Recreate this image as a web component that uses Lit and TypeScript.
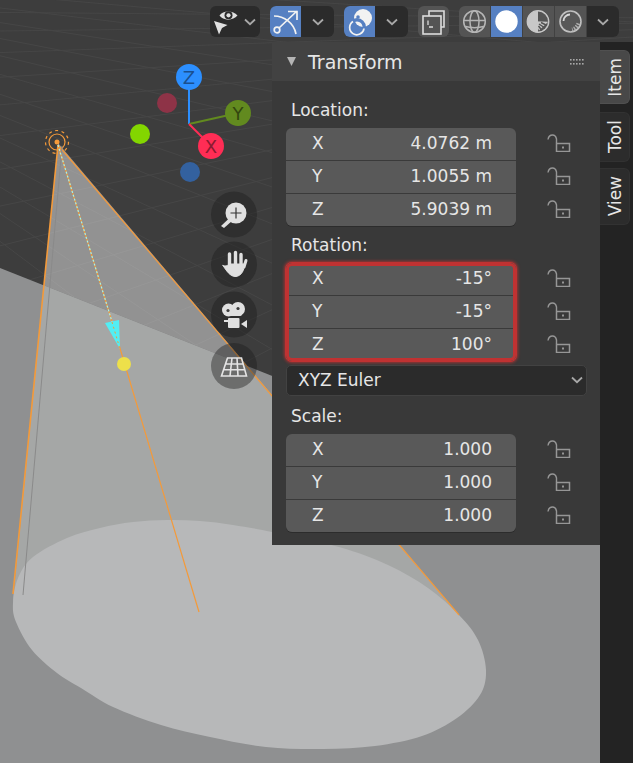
import { LitElement, html, svg, css } from 'lit';
import { customElement } from 'lit/decorators.js';

const SCENE_EDGE = '0,268 633,519 633,763 0,763';
const SKY_EDGE = '0,0 633,0 633,519 0,268';
const CONE = '58,143 13,600 24,620 459,615';
const DISC: number[][] = [
  [13, 603], [16, 622], [32, 650], [57, 673], [81, 688], [113, 707], [161, 725], [210, 737],
  [266, 747], [323, 749], [375, 746], [422, 736], [457, 718], [480, 695], [486, 670], [478, 640],
  [459, 615], [428, 588], [388, 565], [339, 547], [272, 532], [233, 525], [200, 521], [167, 520],
  [133, 522], [100, 528], [67, 538], [33, 557], [18, 578],
];

// closed catmull-rom through the outline points
const smoothPath = (pts: number[][]) => {
  const n = pts.length;
  let d = `M${pts[0][0]} ${pts[0][1]}`;
  for (let i = 0; i < n; i++) {
    const [p0, p1, p2, p3] = [pts[(i + n - 1) % n], pts[i], pts[(i + 1) % n], pts[(i + 2) % n]];
    const c1 = [p1[0] + (p2[0] - p0[0]) / 6, p1[1] + (p2[1] - p0[1]) / 6];
    const c2 = [p2[0] - (p3[0] - p1[0]) / 6, p2[1] - (p3[1] - p1[1]) / 6];
    d += `C${c1[0]} ${c1[1]} ${c2[0]} ${c2[1]} ${p2[0]} ${p2[1]}`;
  }
  return d + 'Z';
};

// two families of floor lines, each fanning out of its vanishing point
const gridLines = () => {
  const lines = [];
  for (let i = 0; i < 20; i++) {
    const y = -120 + i * i * 2.2 + i * 24;
    lines.push([-300, -40 + i * 4, 700, y + 120]);
  }
  for (let i = 0; i < 20; i++) {
    const y = 12 + i * i * 1.6 + i * 18;
    lines.push([900, 20, -50, y]);
  }
  return lines;
};

const lockIcon = html`<svg class="lock" width="24" height="18" viewBox="0 0 24 18">
  <path d="M1 5.5C1.5 2.5 3.5 1 5.5 1S9 2.5 9.5 5V9" fill="none" stroke="#969696" stroke-width="1.4" />
  <rect x="9.5" y="9.5" width="13" height="8" fill="none" stroke="#969696" stroke-width="1.5" />
  <rect x="15" y="12.5" width="2" height="2" fill="#969696" />
</svg>`;

const chevron = html`<svg width="12" height="8" viewBox="0 0 12 8">
  <path d="M1 1.5L6 6.2L11 1.5" fill="none" stroke="#a8a8a8" stroke-width="1.8" />
</svg>`;

const transformFields = {
  location: [
    ['X', '4.0762 m'],
    ['Y', '1.0055 m'],
    ['Z', '5.9039 m'],
  ],
  rotation: [
    ['X', '-15°'],
    ['Y', '-15°'],
    ['Z', '100°'],
  ],
  scale: [
    ['X', '1.000'],
    ['Y', '1.000'],
    ['Z', '1.000'],
  ],
};

@customElement('app-root')
export class AppRoot extends LitElement {
  static styles = css`
    :host {
      display: block;
      width: 633px;
      height: 763px;
      font-family: 'DejaVu Sans', sans-serif;
      font-size: 17px;
      color: #e6e6e6;
    }
    .screen {
      position: relative;
      width: 633px;
      height: 763px;
      overflow: hidden;
      background: #3d3d3d;
    }
    .scene {
      position: absolute;
      inset: 0;
    }
    .toolbar {
      position: relative;
      height: 42px;
      box-sizing: border-box;
      padding: 6px 14px 5px 0;
      display: flex;
      justify-content: flex-end;
      gap: 10px;
    }
    .group {
      display: flex;
      height: 31px;
      border-radius: 6px;
      overflow: hidden;
      background: #2b2b2b;
    }
    .group.xray {
      background: #545454;
    }
    .seg {
      width: 31px;
      height: 31px;
      display: flex;
      align-items: center;
      justify-content: center;
    }
    .seg.drop {
      width: 33px;
    }
    .seg.on {
      background: #5680c2;
    }
    .seg.grey {
      background: #545454;
    }
    .seg.wide {
      width: 50px;
      justify-content: flex-start;
    }
    .group.shading {
      gap: 1px;
      background: #414141;
    }
    .shading .seg.drop {
      width: 32px;
      background: #2b2b2b;
    }
    .dock {
      position: relative;
      height: 721px;
      display: flex;
      justify-content: flex-end;
      align-items: flex-start;
    }
    .panel {
      width: 328px;
      background: #393939;
    }
    .panel-head {
      height: 39px;
      display: flex;
      align-items: center;
      padding: 0 16px 0 15px;
      background: #424242;
      font-size: 19px;
    }
    .panel-head .title {
      margin-left: 12px;
      flex: 1;
    }
    .panel-body {
      padding: 19px 13px 13px 14px;
    }
    .label {
      height: 20px;
      line-height: 20px;
      padding-left: 5px;
      margin-bottom: 8px;
    }
    .section {
      display: flex;
      margin-bottom: 9px;
    }
    .fields {
      position: relative;
      width: 230px;
      display: flex;
      flex-direction: column;
      gap: 1px;
      background: #3a3a3a;
      border-radius: 6px;
      overflow: hidden;
      box-shadow: 0 1px 0 #2c2c2c;
    }
    .row {
      height: 32px;
      box-sizing: border-box;
      padding: 0 24px 2px 26px;
      display: flex;
      align-items: center;
      justify-content: space-between;
      background: #595959;
    }
    .alert {
      overflow: visible;
      box-shadow: 0 0 0 1px #c03232, 0 0 3px 2px rgba(192, 50, 50, 0.75);
    }
    .alert .row:first-child {
      border-radius: 6px 6px 0 0;
    }
    .alert .row:last-child {
      border-radius: 0 0 6px 6px;
    }
    .alert::after {
      content: '';
      position: absolute;
      inset: 0;
      border-radius: 6px;
      box-shadow: inset 0 0 0 3px #c03232;
    }
    .locks {
      margin-left: 31px;
      display: flex;
      flex-direction: column;
      gap: 1px;
    }
    .locks span {
      height: 32px;
      box-sizing: border-box;
      padding-bottom: 2px;
      display: flex;
      align-items: center;
    }
    .with-select {
      margin-bottom: 4px;
    }
    .select {
      width: 301px;
      height: 31px;
      box-sizing: border-box;
      display: flex;
      align-items: center;
      justify-content: space-between;
      padding: 0 3px 2px 11px;
      background: #2b2b2b;
      border: 1px solid #424242;
      border-radius: 5px;
      margin-bottom: 10px;
    }
    .last {
      margin-bottom: 0;
    }
    .tabs {
      width: 33px;
      height: 100%;
      background: #232323;
      box-sizing: border-box;
      padding-top: 8px;
      display: flex;
      flex-direction: column;
    }
    .tab {
      width: 30px;
      box-sizing: border-box;
      display: flex;
      align-items: center;
      justify-content: center;
      border-radius: 0 6px 6px 0;
      background: #2c2c2c;
      border: 1px solid #323232;
      border-left: none;
    }
    .tab span {
      writing-mode: vertical-rl;
      transform: rotate(180deg);
    }
    .tab.active {
      background: #484848;
      border-color: #505050;
    }
  `;

  private renderScene() {
    return html`<svg class="scene" width="633" height="763" viewBox="0 0 633 763">
      <defs>
        <clipPath id="sky"><polygon points=${SKY_EDGE} /></clipPath>
        <clipPath id="ground"><polygon points=${SCENE_EDGE} /></clipPath>
      </defs>
      <rect width="633" height="763" fill="#3d3d3d" />
      <g clip-path="url(#sky)" stroke="#464646" stroke-width="1">
        ${gridLines().map(([a, b, c, d]) => svg`<line x1=${a} y1=${b} x2=${c} y2=${d} />`)}
      </g>
      <polygon points=${SCENE_EDGE} fill="#8f9091" />
      <polygon points=${CONE} fill="#fff" fill-opacity="0.44" clip-path="url(#sky)" />
      <polygon points=${CONE} fill="#a5a7a6" clip-path="url(#ground)" />
      <path d=${smoothPath(DISC)} fill="#b7b8b9" />

      <g fill="none" stroke="#f49a3a" stroke-width="1.2">
        <line x1="58" y1="145" x2="13" y2="594" stroke-width="1.6" />
        <line x1="58" y1="145" x2="459" y2="615" />
        <line x1="113" y1="325" x2="199" y2="612" />
        <circle cx="57" cy="142" r="8" />
        <circle cx="57" cy="142" r="11.5" stroke-dasharray="3 3.5" />
      </g>
      <circle cx="57" cy="142" r="2.5" fill="#f49a3a" />
      <line x1="62" y1="146" x2="23" y2="595" stroke="#8a8a8a" stroke-width="1" />
      <line x1="58" y1="145" x2="113" y2="325" stroke="#f49a3a" stroke-width="1.2" />
      <line x1="58" y1="145" x2="113" y2="325" stroke="#9ff4f0" stroke-width="1.2" stroke-dasharray="2 2" />
      <polygon points="105,323 119,320 120,349" fill="#52eef4" />
      <line x1="112" y1="322" x2="120" y2="349" stroke="#f49a3a" stroke-width="1" stroke-dasharray="2 3" />
      <circle cx="124" cy="364" r="7" fill="#ede04a" />

      <g font-family="DejaVu Sans" font-size="18" text-anchor="middle">
        <circle cx="167" cy="103" r="10" fill="#8e3347" />
        <circle cx="140" cy="134" r="10" fill="#83d600" />
        <circle cx="190" cy="172" r="10" fill="#33619f" />
        <line x1="189" y1="124" x2="189" y2="80" stroke="#2c8fff" stroke-width="2" />
        <line x1="189" y1="124" x2="238" y2="113" stroke="#628a1f" stroke-width="2" />
        <line x1="189" y1="124" x2="211" y2="146" stroke="#ff2d55" stroke-width="2" />
        <circle cx="189" cy="77" r="13" fill="#2c8fff" />
        <circle cx="238" cy="113" r="13" fill="#628a1f" />
        <circle cx="211" cy="146" r="13" fill="#ff2d55" />
        <text x="189" y="84" fill="#1a4f8f">Z</text>
        <text x="238" y="120" fill="#33470f">Y</text>
        <text x="211" y="153" fill="#8a1a30">X</text>
      </g>

      <g fill="#1c1c1c" fill-opacity="0.42">
        <circle cx="234" cy="214.5" r="23" />
        <circle cx="234" cy="264.5" r="23" />
        <circle cx="234" cy="314.5" r="23" />
        <circle cx="234" cy="366" r="23" />
      </g>
      <g fill="#e0e0e0" stroke="none">
        <circle cx="236" cy="213" r="10.5" />
        <path d="M221 226L229 218.5L232 221L224 228Z" />
        <path d="M230.5 213H241.5M236 207.5V218.5" stroke="#333" stroke-width="1.2" fill="none" />
      </g>
      <g fill="#e0e0e0" stroke="#e0e0e0" stroke-linecap="round">
        <path d="M229.5 265V254M235.5 265V252.5M241 265V254.5" stroke-width="3.4" fill="none" />
        <path d="M244 267L246 260.5" stroke-width="3" fill="none" />
        <path d="M223 265.5C226 267 228 265 230 264H244C245 270 241 276 236 276.5C230 277 226 270 223 265.5Z" stroke-width="1" />
      </g>
      <g fill="#e0e0e0">
        <circle cx="228.5" cy="310" r="6.5" />
        <circle cx="238" cy="309" r="7" />
        <rect x="226" y="308" width="16" height="8" rx="2" />
        <rect x="228" y="318" width="11.5" height="10" rx="1" />
        <rect x="224" y="320" width="4" height="2" />
        <polygon points="241,324 247,320 247,328" />
        <circle cx="228" cy="310.5" r="1.6" fill="#3a3a3a" />
        <circle cx="238" cy="308.5" r="1.6" fill="#3a3a3a" />
      </g>
      <g fill="none" stroke="#e4e4e4" stroke-width="1.6">
        <path d="M227.5 358H241.5L246.5 376H221.5ZM225.5 364H243M223.6 369.8H245M232 358L230 376M237 358L238 376" />
      </g>
    </svg>`;
  }

  private renderSection(rows: string[][], extra = '') {
    return html`<div class="section ${extra.includes('with-select') ? 'with-select' : ''} ${extra.includes('last') ? 'last' : ''}">
      <div class="fields ${extra.includes('alert') ? 'alert' : ''}">
        ${rows.map(([axis, value]) => html`<div class="row"><span>${axis}</span><span>${value}</span></div>`)}
      </div>
      <div class="locks">${rows.map(() => html`<span>${lockIcon}</span>`)}</div>
    </div>`;
  }

  private renderToolbar() {
    return html`<div class="toolbar">
      <div class="group">
        <div class="seg wide">
          <svg width="34" height="31" viewBox="0 0 34 31">
            <polygon points="4,15 17.5,19 12,22 9,28.5" fill="#e0e0e0" />
            <path d="M9.5 9.5C13 4 23 4 27.5 9.5C23 15 13 15 9.5 9.5Z" fill="#e0e0e0" />
            <circle cx="18.5" cy="9.3" r="4" fill="#2b2b2b" />
            <circle cx="18.5" cy="9.3" r="2.1" fill="#e0e0e0" />
          </svg>
          ${chevron}
        </div>
      </div>
      <div class="group">
        <div class="seg on">
          <svg width="31" height="31" viewBox="0 0 31 31">
            <g fill="none" stroke="#f2f2f2" stroke-width="1.7">
              <path d="M4 10C14 10 24 17 26 28" />
              <circle cx="7" cy="24" r="2.8" />
              <path d="M9 22L27 5M18 5.5H27V14" />
            </g>
          </svg>
        </div>
        <div class="seg drop">${chevron}</div>
      </div>
      <div class="group">
        <div class="seg on">
          <svg width="31" height="31" viewBox="0 0 31 31">
            <circle cx="19" cy="12" r="9" fill="#f2f2f2" />
            <circle cx="13" cy="21" r="7.2" fill="none" stroke="#5680c2" stroke-width="3.4" />
            <circle cx="14" cy="11" r="1.8" fill="#5680c2" />
            <path d="M9 15.5A7.2 7.2 0 1 0 20 22.5" fill="none" stroke="#f2f2f2" stroke-width="1.7" />
          </svg>
        </div>
        <div class="seg drop">${chevron}</div>
      </div>
      <div class="group xray">
        <div class="seg">
          <svg width="31" height="31" viewBox="0 0 31 31">
            <g fill="none" stroke="#dcdcdc" stroke-width="1.6">
              <path d="M11 10V5H26V21H23" />
              <rect x="5" y="10" width="18" height="18" />
            </g>
            <path d="M10 14.5V19M11 21H15" stroke="#dcdcdc" stroke-width="1.3" />
          </svg>
        </div>
      </div>
      <div class="group shading">
        <div class="seg grey">
          <svg width="31" height="31" viewBox="0 0 31 31">
            <g fill="none" stroke="#b5b5b5" stroke-width="1.5">
              <circle cx="15.5" cy="15.5" r="10.8" />
              <ellipse cx="15.5" cy="15.5" rx="4.5" ry="10.8" />
              <path d="M4.7 14.5H26.3M6.5 20.5C11 22 20 22 24.5 20.5" />
            </g>
          </svg>
        </div>
        <div class="seg on">
          <svg width="31" height="31" viewBox="0 0 31 31"><circle cx="15.5" cy="15.5" r="11.2" fill="#fff" /></svg>
        </div>
        <div class="seg grey">
          <svg width="31" height="31" viewBox="0 0 31 31">
            <circle cx="15" cy="15.5" r="10.8" fill="#c8c8c8" stroke="#c8c8c8" stroke-width="1.2" />
            <path d="M15 5.5A10 10 0 0 1 25 15.5H15Z" fill="#555" />
            <path d="M15 15.5H25A10 10 0 0 1 15 25.5Z" fill="#555" />
            <path d="M15 15.5L12 15.5L16 24.5L25 16Z" fill="#c8c8c8" />
            <path d="M24 19.5L18 16.5M22 22L16 18M19 24.5L15.5 20" stroke="#555" stroke-width="1.5" />
          </svg>
        </div>
        <div class="seg grey">
          <svg width="31" height="31" viewBox="0 0 31 31">
            <circle cx="15.5" cy="15.5" r="10.5" fill="#585858" stroke="#c0c0c0" stroke-width="1.6" />
            <path d="M8.5 15C8.5 11.5 11.5 8.5 15 8.5" fill="none" stroke="#d8d8d8" stroke-width="1.8" />
            <path d="M23.5 17.5C22.5 20.5 20 23 17 23.5" fill="none" stroke="#b0b0b0" stroke-width="4" stroke-dasharray="1.5 1.3" />
          </svg>
        </div>
        <div class="seg drop">${chevron}</div>
      </div>
    </div>`;
  }

  protected render() {
    return html`<div class="screen">
      ${this.renderScene()} ${this.renderToolbar()}
      <div class="dock">
        <div class="panel">
          <div class="panel-head">
            <svg width="9" height="9" viewBox="0 0 9 9"><polygon points="0,0 9,0 4.5,9" fill="#b4b4b4" /></svg>
            <span class="title">Transform</span>
            <svg width="14" height="6" viewBox="0 0 14 6" fill="#a8a8a8">
              ${[0, 3, 6, 9, 12].map((x) => svg`<rect x=${x} y="0" width="1.6" height="1.6" /><rect x=${x} y="4" width="1.6" height="1.6" />`)}
            </svg>
          </div>
          <div class="panel-body">
            <div class="label">Location:</div>
            ${this.renderSection(transformFields.location)}
            <div class="label">Rotation:</div>
            ${this.renderSection(transformFields.rotation, 'alert with-select')}
            <div class="select"><span>XYZ Euler</span>${chevron}</div>
            <div class="label">Scale:</div>
            ${this.renderSection(transformFields.scale, 'last')}
          </div>
        </div>
        <div class="tabs">
          <div class="tab active" style="height:54px"><span>Item</span></div>
          <div class="tab" style="height:50px;margin-top:8px"><span>Tool</span></div>
          <div class="tab" style="height:57px;margin-top:6px"><span>View</span></div>
        </div>
      </div>
    </div>`;
  }
}

declare global {
  interface HTMLElementTagNameMap {
    'app-root': AppRoot;
  }
}
